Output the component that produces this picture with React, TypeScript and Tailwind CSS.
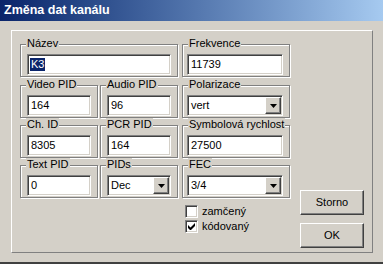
import React from "react";

const sunken =
  "bg-white border border-t-[#808080] border-l-[#808080] border-r-white border-b-white shadow-[inset_1px_1px_0_#404040,inset_-1px_-1px_0_#d4d0c8]";
const raised =
  "bg-[#d4d0c8] border border-t-white border-l-white border-r-[#404040] border-b-[#404040] shadow-[inset_-1px_-1px_0_#808080,inset_1px_1px_0_#d4d0c8]";

function Group({ label, className, children }: { label: string; className: string; children: React.ReactNode }) {
  return (
    <div
      className={`relative h-[33px] border border-[#808080] shadow-[inset_1px_1px_0_#fff,1px_1px_0_#fff] pt-[9px] ${className}`}
    >
      <span className="absolute -top-[8px] left-[5px] bg-[#d4d0c8] px-[1px] leading-[13px] text-black">
        {label}
      </span>
      {children}
    </div>
  );
}

function Field({ value, selected }: { value: string; selected?: boolean }) {
  return (
    <div className={`h-[21px] ${sunken} flex items-center pl-[2px] leading-[13px]`}>
      {selected ? <span className="bg-[#0a246a] text-white px-[1px]">{value}</span> : <span className="pl-[1px]">{value}</span>}
    </div>
  );
}

function Combo({ value }: { value: string }) {
  return (
    <div className={`h-[21px] ${sunken} flex items-center pl-[3px] pr-[1px] leading-[13px]`}>
      <span className="flex-1">{value}</span>
      <div className={`w-[16px] h-[17px] ${raised} flex items-center justify-center`}>
        <svg width="7" height="4" viewBox="0 0 7 4">
          <path d="M0 0h7L3.5 4z" fill="#000" />
        </svg>
      </div>
    </div>
  );
}

function Check({ label, checked }: { label: string; checked?: boolean }) {
  return (
    <div className="flex items-center h-[13px] ml-[3px]">
      <div className={`w-[13px] h-[13px] ${sunken} flex items-center justify-center`}>
        {checked && (
          <svg width="7" height="7" viewBox="0 0 7 7">
            <path d="M0 2v3l2 2h1l4-4V0L2.5 4.5z" fill="#000" />
          </svg>
        )}
      </div>
      <span className="ml-[4px] leading-[13px]">{label}</span>
    </div>
  );
}

function Button({ label }: { label: string }) {
  return (
    <div className={`w-[64px] h-[25px] ${raised} flex items-center justify-center`}>{label}</div>
  );
}

export default function App() {
  return (
    <div className="relative w-[383px] h-[264px] bg-[#d4d0c8] overflow-hidden text-[11px] text-black font-['Liberation_Sans',Arial,sans-serif] border-b-2 border-b-[#404040]">
      <div className="h-[21px] bg-gradient-to-r from-[#0a246a] to-[#a6caf0] flex items-center px-[4px] text-white font-bold text-[12.5px]">
        Změna dat kanálu
      </div>

      <div className="ml-[11px] mt-[9px] w-[362px] h-[223px] border border-t-white border-l-white border-r-[#808080] border-b-[#808080] flex pl-[8px] pt-[13px]">
        <div className="flex flex-col">
          <div className="flex">
            <Group label="Název" className="w-[158px] px-[6px]">
              <Field value="K3" selected />
            </Group>
            <Group label="Frekvence" className="w-[108px] ml-[4px] pl-[4px] pr-[6px]">
              <Field value="11739" />
            </Group>
          </div>

          <div className="flex mt-[8px]">
            <Group label="Video PID" className="w-[78px] px-[6px]">
              <Field value="164" />
            </Group>
            <Group label="Audio PID" className="w-[78px] ml-[2px] px-[6px]">
              <Field value="96" />
            </Group>
            <Group label="Polarizace" className="w-[108px] ml-[4px] pl-[4px] pr-[6px]">
              <Combo value="vert" />
            </Group>
          </div>

          <div className="flex mt-[7px]">
            <Group label="Ch. ID" className="w-[78px] px-[6px]">
              <Field value="8305" />
            </Group>
            <Group label="PCR PID" className="w-[78px] ml-[2px] px-[6px]">
              <Field value="164" />
            </Group>
            <Group label="Symbolová rychlost" className="w-[108px] ml-[4px] pl-[4px] pr-[6px]">
              <Field value="27500" />
            </Group>
          </div>

          <div className="flex mt-[7px]">
            <Group label="Text PID" className="w-[78px] px-[6px]">
              <Field value="0" />
            </Group>
            <Group label="PIDs" className="w-[78px] ml-[2px] px-[6px]">
              <Combo value="Dec" />
            </Group>
            <Group label="FEC" className="w-[108px] ml-[4px] pl-[4px] pr-[6px]">
              <Combo value="3/4" />
            </Group>
          </div>

          <div className="flex">
            <div className="w-[162px]" />
            <div className="flex flex-col gap-[2px] mt-[7px]">
              <Check label="zamčený" />
              <Check label="kódovaný" checked />
            </div>
          </div>
        </div>

        <div className="flex flex-col ml-[10px] pt-[146px] gap-[8px]">
          <Button label="Storno" />
          <Button label="OK" />
        </div>
      </div>
    </div>
  );
}
